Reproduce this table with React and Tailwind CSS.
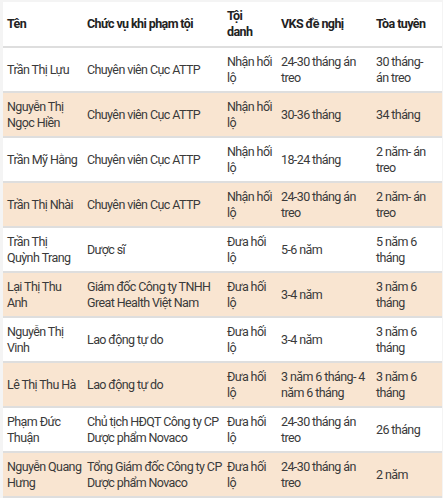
import React from 'react';

const rows = [
    ['Trần Thị Lựu', 'Chuyên viên Cục ATTP', 'Nhận hối lộ', '24-30 tháng án treo', '30 tháng- án treo'],
    ['Nguyễn Thị Ngọc Hiền', 'Chuyên viên Cục ATTP', 'Nhận hối lộ', '30-36 tháng', '34 tháng'],
    ['Trần Mỹ Hằng', 'Chuyên viên Cục ATTP', 'Nhận hối lộ', '18-24 tháng', '2 năm- án treo'],
    ['Trần Thị Nhài', 'Chuyên viên Cục ATTP', 'Nhận hối lộ', '24-30 tháng án treo', '2 năm- án treo'],
    ['Trần Thị Quỳnh\u00a0Trang', 'Dược sĩ', 'Đưa hối lộ', '5-6 năm', '5 năm 6 tháng'],
    ['Lại Thị Thu Anh', 'Giám đốc Công ty TNHH Great Health Việt Nam', 'Đưa hối lộ', '3-4 năm', '3 năm 6 tháng'],
    ['Nguyễn Thị Vinh', 'Lao động tự do', 'Đưa hối lộ', '3-4 năm', '3 năm 6 tháng'],
    ['Lê Thị Thu Hà', 'Lao động tự do', 'Đưa hối lộ', '3 năm 6 tháng- 4 năm 6 tháng', '3 năm 6 tháng'],
    ['Phạm Đức Thuận', 'Chủ tịch HĐQT Công ty CP Dược phẩm Novaco', 'Đưa hối lộ', '24-30 tháng án treo', '26 tháng'],
    ['Nguyễn Quang Hưng', 'Tổng Giám đốc Công ty CP Dược phẩm Novaco', 'Đưa hối lộ', '24-30 tháng án treo', '2 năm'],
];

const pads = ['pl-1 pr-0', 'pl-1 pr-0', 'pl-1 pr-0.5', 'pl-1 pr-0.5', 'pl-1 pr-[10px]'];

export default function App() {
    return (
        <div className="bg-[#f4f4f4] pl-[3px] pt-[2px] pr-[1px] h-[498px] overflow-hidden font-['Roboto',sans-serif] text-[12.5px] tracking-[-0.6px] leading-[16px] text-[#3a3a3a]">
            <table className="w-full table-fixed border-collapse bg-white">
                <colgroup>
                    <col className="w-[80px]" />
                    <col className="w-[140px]" />
                    <col className="w-[54px]" />
                    <col className="w-[95px]" />
                    <col />
                </colgroup>
                <thead>
                    <tr className="h-[45px] border-b-2 border-[#dedede]">
                        <th className="pl-1 pr-0 text-left font-bold text-[#222]">Tên</th>
                        <th className="pl-1 pr-0 text-left font-bold text-[#222]">Chức vụ khi phạm tội</th>
                        <th className="pl-1 pr-0.5 text-left font-bold text-[#222]">Tội<br />danh</th>
                        <th className="pl-1 pr-0.5 text-left font-bold text-[#222]">VKS đề nghị</th>
                        <th className="pl-1 pr-0.5 text-left font-bold text-[#222]">Tòa tuyên</th>
                    </tr>
                </thead>
                <tbody>
                    {rows.map((row, i) => (
                        <tr key={i} className={`h-[45px] border-b-2 border-[#dedede] ${i % 2 === 1 ? 'bg-[#f9e5d1]' : 'bg-white'}`}>
                            {row.map((cell, j) => (
                                <td key={j} className={`${pads[j]} align-middle`}>{cell}</td>
                            ))}
                        </tr>
                    ))}
                </tbody>
            </table>
        </div>
    );
}
